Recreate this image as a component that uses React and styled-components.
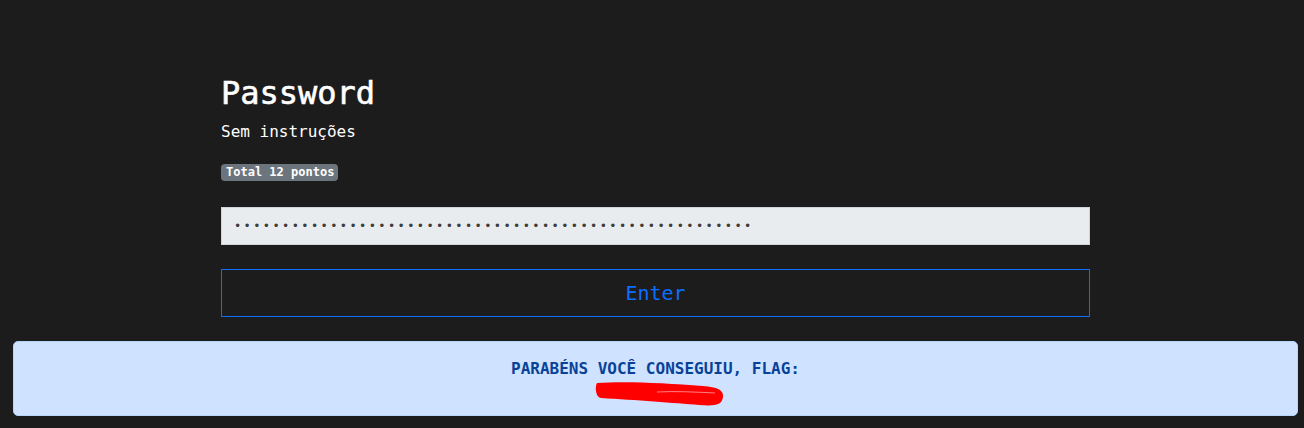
import React from "react";
import styled, { createGlobalStyle } from "styled-components";

const GlobalStyle = createGlobalStyle`
  html, body {
    margin: 0;
    padding: 0;
    background-color: #1c1c1c;
  }
  body {
    font-family: "DejaVu Sans Mono", "Liberation Mono", monospace;
    color: #ffffff;
  }
`;

const Page = styled.div`
  min-height: 428px;
  display: flex;
  flex-direction: column;
  padding-top: 74px;
  box-sizing: border-box;
`;

const Challenge = styled.section`
  width: 869px;
  margin-left: 221px;
  display: flex;
  flex-direction: column;
`;

const Title = styled.h1`
  margin: 0 0 8px;
  font-size: 32px;
  line-height: 38px;
  font-weight: 500;
  color: #ffffff;
  -webkit-text-stroke: 0.6px #ffffff;
`;

const Subtitle = styled.p`
  margin: 0 0 20px;
  font-size: 16px;
  line-height: 24px;
`;

const Badge = styled.span`
  align-self: flex-start;
  background-color: #6c757d;
  color: #ffffff;
  font-size: 12px;
  font-weight: 700;
  line-height: 13px;
  padding: 2px 4px 2px 5px;
  border-radius: 4px;
  margin-bottom: 26px;
`;

const PasswordInput = styled.input`
  box-sizing: border-box;
  width: 100%;
  height: 38px;
  margin: 0 0 24px;
  padding: 6px 12px;
  background-color: #e9ecef;
  border: 1px solid #ced4da;
  border-radius: 0;
  font-family: "DejaVu Sans Mono", monospace;
  font-size: 12px;
  letter-spacing: 2.4px;
  color: #3c3c3c;
  outline: none;
`;

const EnterButton = styled.button`
  box-sizing: border-box;
  width: 100%;
  height: 48px;
  background: transparent;
  border: 1px solid #0d6efd;
  border-radius: 0;
  color: #0d6efd;
  font-family: "DejaVu Sans Mono", monospace;
  font-size: 20px;
  cursor: pointer;
`;

const Alert = styled.div`
  margin: 24px 6px 0 13px;
  padding: 15px 16px 8px;
  background-color: #cfe2ff;
  border: 1px solid #b6d4fe;
  border-radius: 5px;
  color: #084298;
  display: flex;
  flex-direction: column;
  align-items: center;
`;

const AlertText = styled.strong`
  font-size: 16px;
  line-height: 24px;
  font-weight: 700;
  text-transform: uppercase;
`;

const Redacted = styled.svg`
  display: block;
  width: 130px;
  height: 26px;
  margin-left: 8px;
`;

function Scribble() {
  return (
    <Redacted viewBox="0 0 130 26">
      <path
        d="M2 2 C30 0, 70 2, 108 5 C122 6, 129 9, 128 16 C127 25, 118 25, 104 24 C80 22, 40 19, 6 17 C0 16, 0 5, 2 2 Z"
        fill="#ff0000"
      />
      <path
        d="M62 11 C80 10, 100 11, 120 12"
        stroke="#ff8080"
        strokeWidth="1"
        fill="none"
      />
    </Redacted>
  );
}

export default function App() {
  return (
    <>
      <GlobalStyle />
      <Page>
        <Challenge>
          <Title>Password</Title>
          <Subtitle>Sem instruções</Subtitle>
          <Badge>Total 12 pontos</Badge>
          <PasswordInput type="password" readOnly value={"x".repeat(54)} />
          <EnterButton>Enter</EnterButton>
        </Challenge>
        <Alert>
          <AlertText>Parabéns você conseguiu, flag:</AlertText>
          <Scribble />
        </Alert>
      </Page>
    </>
  );
}
